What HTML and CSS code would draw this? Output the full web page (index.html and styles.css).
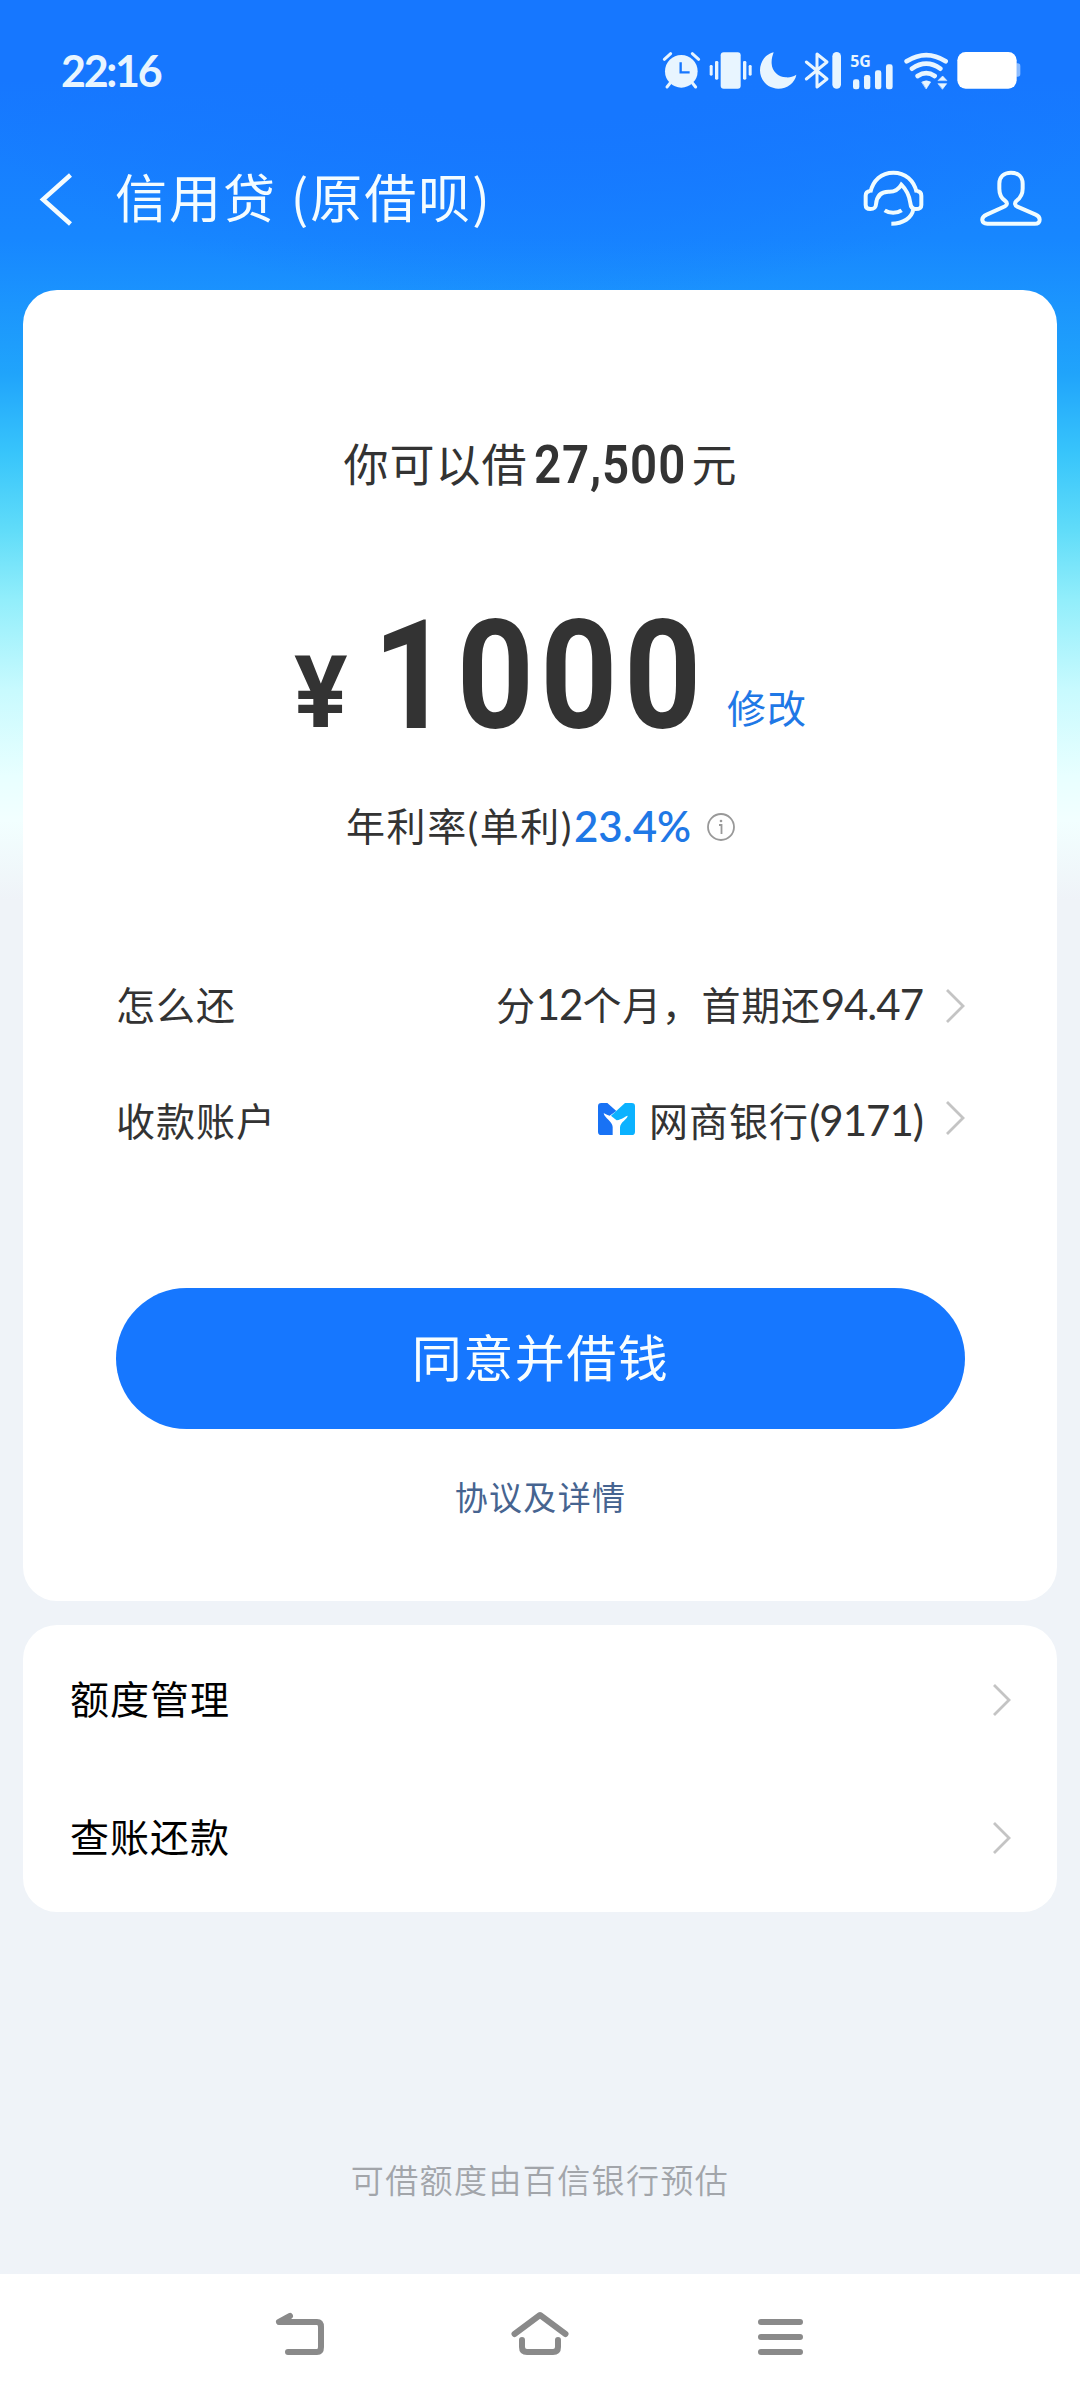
FILE: index.html
```html
<!DOCTYPE html>
<html lang="zh-CN">
<head>
<meta charset="utf-8">
<title>信用贷</title>
<link rel="stylesheet" href="styles.css">
</head>
<body>
<div class="status">
  <span class="time">22:16</span>
  <div class="status-icons">
    <svg width="46.3" height="40" viewBox="66 65 139 120" fill="none" stroke="#e8f5ff" stroke-linecap="round" stroke-width="9"><circle cx="124" cy="126" r="49" fill="#e8f5ff" stroke="none"/><path d="M73 90L92 73M157 73L176 90M90 162L81 173M158 162L167 173"/><path d="M122 99V129H149" stroke="#1677ff" stroke-width="7" stroke-linecap="butt"/></svg>
    <svg width="50.7" height="40" viewBox="205 65 152 120" fill="#e8f5ff"><rect x="240" y="69" width="60" height="109" rx="9"/><rect x="223" y="95" width="10" height="56" rx="4"/><rect x="207" y="107" width="9" height="32" rx="4"/><rect x="307" y="95" width="10" height="56" rx="4"/><rect x="324" y="107" width="9" height="32" rx="4"/></svg>
    <svg width="45" height="40" viewBox="357 65 135 120" fill="#e8f5ff"><path d="M401 69C378 74 360 96 360 123C360 154 384 178 415 178C442 178 465 160 469 136C458 143 448 145 438 144C415 143 396 125 395 103C394 91 397 80 401 69Z"/></svg>
    <svg width="46" height="40" viewBox="492 65 138 120" fill="none" stroke="#e8f5ff" stroke-width="9" stroke-linecap="round" stroke-linejoin="round"><path d="M499 98L561 149L531 173V74L561 98L499 149"/><path d="M590 81V165" stroke-width="26"/></svg>
    <svg class="signal" width="53.3" height="40" viewBox="630 65 160 120" fill="#e8f5ff"><text class="net" x="631" y="112">5G</text><rect x="639" y="150" width="19" height="30" rx="7"/><rect x="672" y="137" width="19" height="43" rx="7"/><rect x="705" y="123" width="19" height="57" rx="7"/><rect x="738" y="105" width="20" height="75" rx="7"/></svg>
    <svg width="53.3" height="40" viewBox="790 65 160 120" fill="none" stroke="#e8f5ff" stroke-width="14" stroke-linecap="round"><path d="M798 96Q857 59 915 96M814 118Q857 88 899 118M831 140Q857 123 882 140"/><path d="M844 158Q857 151 870 158L857 178ZM893 153L906 140L918 153ZM893 163H918L906 179Z" fill="#e8f5ff" stroke-width="2" stroke-linejoin="round"/></svg>
    <svg width="64" height="40" viewBox="950 65 192 120" fill="#fff"><path d="M1128 102H1132Q1140 102 1140 110V134Q1140 142 1132 142H1128Z" fill="#8cbcff"/><rect x="951" y="68" width="178" height="110" rx="25"/></svg>
  </div>
</div>
<header class="bar">
  <svg class="back" width="36" height="56" viewBox="38 171 36 56"><path d="M70.500 174L43 198.500L70.500 223"/></svg>
  <h1>信用贷 (原借呗)</h1>
  <svg class="head-icon" width="64" height="60" viewBox="131 91 192 180"><path d="M153 158C161 122 186 99 222 99C258 99 284 122 292 158"/><path d="M153 154C144 155 139 159 139 168V196C139 205 144 208 153 208C164 208 169 205 170 194C172 170 184 156 207 156C226 157 238 149 246 135C262 151 270 167 273 190C274 203 279 208 289 208C301 208 306 205 306 196V168C306 159 301 155 292 154"/><path d="M282 208C278 235 251 252 216 252M196 212C211 222 232 222 247 212"/></svg>
  <svg class="head-icon user" width="64" height="60" viewBox="477 91 192 180"><path d="M573 99C551 99 538 112 538 132V147C538 166 544 176 556 184C563 189 562 196 555 200L500 225C489 230 486 235 487 242C488 250 493 252 502 252H644C653 252 659 248 659 240C659 233 656 229 647 225L592 201C584 197 583 190 589 184C602 174 608 165 608 147V132C608 112 595 99 573 99Z"/></svg>
</header>
<main>
  <section class="card loan">
    <div class="limit"><span>你可以借</span><b>27,500</b><span>元</span></div>
    <div class="amount"><span class="yen">¥</span><span class="value">1000</span><a class="edit">修改</a></div>
    <div class="rate"><span>年利率<i>(</i>单利<i>)</i></span><b>23.4%</b><svg width="28" height="28" viewBox="0 0 28 28"><circle cx="14" cy="14" r="13"/><path d="M12 12H14.500V21"/><circle class="dot" cx="14" cy="8" r="1.300"/></svg></div>
    <div class="row first"><span>怎么还</span><span class="detail">分<i>12</i>个月，首期还<i>94.47</i></span><svg class="chev" width="20" height="36" viewBox="0 0 20 36"><path d="M2 2L18 18L2 34"/></svg></div>
    <div class="row account"><span>收款账户</span><svg class="logo" width="37" height="32" viewBox="360 432 111 96"><path fill="#1872f5" d="M370 432H388L415 456L395 470C386 468 380 463 377 463C379 477 404 488 404 504V528H370Q360 528 360 518V442Q360 432 370 432Z"/><path fill="#0bb2ff" d="M441 432H461Q471 432 471 442V518Q471 528 461 528H426V506C426 489 449 480 449 470C442 472 432 481 416 484C409 477 403 474 399 470Z"/></svg><span class="detail">网商银行<i>(9171)</i></span><svg class="chev" width="20" height="36" viewBox="0 0 20 36"><path d="M2 2L18 18L2 34"/></svg></div>
    <button class="agree">同意并借钱</button>
    <a class="terms">协议及详情</a>
  </section>
  <section class="card menu">
    <div class="item"><span>额度管理</span><svg class="chev" width="20" height="36" viewBox="0 -1 20 36"><path d="M2 3L17 18L2 33"/></svg></div>
    <div class="item"><span>查账还款</span><svg class="chev" width="20" height="36" viewBox="0 -1 20 36"><path d="M2 3L17 18L2 33"/></svg></div>
  </section>
  <p class="note">可借额度由百信银行预估</p>
</main>
<nav class="navbar">
  <svg width="60" height="50" viewBox="270 2309 60 50"><path d="M290 2316L279 2322H317Q321 2322 321 2327V2347Q321 2352 317 2352H288"/></svg>
  <svg width="60" height="50" viewBox="510 2309 60 50"><path d="M514.500 2334L540 2315L565.500 2334M522 2340V2347Q522 2352 527 2352H553Q558 2352 558 2347V2340"/></svg>
  <svg width="60" height="50" viewBox="750 2309 60 50"><path d="M761 2322H800M761 2337H800M761 2352H800"/></svg>
</nav>
</body>
</html>
```
FILE: styles.css
```css
* { box-sizing: border-box; }
body {
  margin: 0;
  width: 1080px;
  height: 2400px;
  display: flex;
  flex-direction: column;
  font-family: "Noto Sans CJK SC", sans-serif;
  font-weight: 400;
  color: #333;
  background:
    radial-gradient(ellipse 640px 300px at 50% 0, #1677ff 40%, rgba(22, 119, 255, 0) 100%),
    linear-gradient(#1677ff 0, #1677ff 80px, #1787ff 240px, #20a4fb 374px, #38c5fb 454px, #60dcf9 530px, #92eefb 600px, #c8fafe 690px, #e8ffff 776px, #f2ffff 820px, #eff3f8 900px, #eff3f8 100%);
}
i { font-style: normal; font-family: Lato, sans-serif; }
svg { display: block; flex: none; }
.status {
  height: 140px;
  padding: 2px 59px 0 61px;
  display: flex;
  justify-content: space-between;
  align-items: center;
}
.time {
  font: 700 43px/60px Lato, sans-serif;
  color: #e8f5ff;
  letter-spacing: -2.300px;
}
.status-icons { display: flex; }
.signal { overflow: visible; }
.net { font: 700 48px "Noto Sans", sans-serif; letter-spacing: -1px; }
.bar {
  height: 150px;
  padding: 0 37px 31px 38px;
  display: flex;
  align-items: center;
}
.back path { fill: none; stroke: #f4fcff; stroke-width: 4.500; }
h1 {
  flex: 1;
  margin: 0 0 8px 41px;
  font-size: 52px;
  font-weight: 400;
  line-height: 80px;
  letter-spacing: 2px;
  color: #f4fcff;
}
.head-icon { fill: none; stroke: #f0fcff; stroke-width: 12; }
.user { margin-left: 52px; }
main {
  height: 1984px;
  padding: 0 23px;
  display: flex;
  flex-direction: column;
  gap: 24px;
}
.card { background: #fff; border-radius: 34px; }
.loan {
  height: 1311px;
  padding: 143px 92px 0 93px;
  display: flex;
  flex-direction: column;
}
.limit {
  height: 60px;
  line-height: 60px;
  display: flex;
  justify-content: center;
  align-items: baseline;
  font-size: 45px;
  letter-spacing: 1px;
}
.limit b {
  width: 151px;
  margin: 0 7px 0 6px;
  font: 600 54px/60px Roboto, sans-serif;
  letter-spacing: 1px;
  transform: translateY(1px) scaleX(.88);
  transform-origin: left;
}
.amount {
  height: 150px;
  margin-top: 107px;
  padding-left: 178px;
  display: flex;
  align-items: baseline;
  line-height: 150px;
}
.yen { width: 79px; font: 700 100px/150px Roboto, sans-serif; }
.value {
  width: 330px;
  font: 700 153px/150px Roboto, sans-serif;
  letter-spacing: 7.300px;
  transform: translateY(1px) scaleX(.88);
  transform-origin: left;
}
.edit { margin-left: 24px; font-size: 39px; letter-spacing: 1px; color: #1f78e6; transform: translateY(-4px); }
.rate {
  height: 60px;
  margin-top: 45px;
  display: flex;
  justify-content: center;
  align-items: center;
  font-size: 39px;
  line-height: 60px;
  letter-spacing: 1.600px;
}
.rate b { margin: 2px 0 0 1px; font: 600 42px/60px Lato, sans-serif; color: #1f78e6; letter-spacing: 0; }
.rate svg { margin: 3px 0 0 16px; fill: none; stroke: #999; stroke-width: 1.800; }
.rate .dot { fill: #999; stroke: none; }
.row {
  height: 116px;
  display: flex;
  align-items: center;
  font-size: 39px;
  letter-spacing: 1px;
}
.first { margin-top: 90px; }
.row i { font-size: 42px; letter-spacing: -1px; }
.detail { margin-left: auto; }
.account .detail { margin-left: 14px; }
.first .detail { letter-spacing: .7px; }
.logo { margin-left: auto; }
.chev { fill: none; stroke: #c4c4c4; stroke-width: 2.800; }
.row .chev { margin: 5px 0 0 22px; }
.account .chev { margin-top: -3px; }
.agree {
  height: 141px;
  margin: 111px 0 0;
  padding: 0 0 6px;
  border: 0;
  border-radius: 71px;
  background: #1677ff;
  color: #f8feff;
  font: 400 50px/135px "Noto Sans CJK SC", sans-serif;
  letter-spacing: 1.500px;
  flex: none;
}
.terms {
  margin-top: 37px;
  text-align: center;
  font-size: 33px;
  line-height: 60px;
  letter-spacing: 1.300px;
  color: #466490;
}
.menu { height: 287px; padding: 5px 45px 0 47px; color: #000; }
.item {
  height: 138px;
  display: flex;
  justify-content: space-between;
  align-items: center;
  font-size: 39px;
  letter-spacing: 1px;
}
.item span { padding-bottom: 4px; }
.note {
  margin: 213px 0 0;
  text-align: center;
  font-size: 33px;
  font-weight: 350;
  line-height: 60px;
  letter-spacing: 1.400px;
  color: #a2a5aa;
}
.navbar {
  height: 126px;
  padding: 35px 270px 0;
  display: flex;
  justify-content: space-between;
  background: #fff;
}
.navbar path { fill: none; stroke: #8a8a8a; stroke-width: 6; stroke-linecap: round; stroke-linejoin: round; }
```
